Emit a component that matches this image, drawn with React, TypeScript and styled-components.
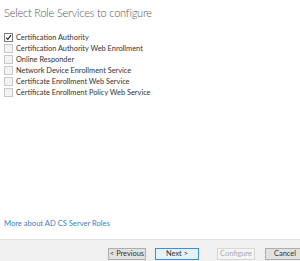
import React from 'react'
import styled, { createGlobalStyle } from 'styled-components'

const GlobalStyle = createGlobalStyle`
  html, body {
    margin: 0;
    padding: 0;
    background: #ffffff;
  }
  body {
    font-family: 'Lato', 'Liberation Sans', sans-serif;
  }
`

const Page = styled.div`
  width: 300px;
  height: 261px;
  display: flex;
  flex-direction: column;
  overflow: hidden;
  background: #fff;
`

const Content = styled.div`
  flex: 1;
  display: flex;
  flex-direction: column;
  padding: 5px 0 0 4px;
`

const Title = styled.h1`
  margin: 0;
  font-family: 'Lato', sans-serif;
  font-weight: 300;
  font-size: 11px;
  letter-spacing: -0.2px;
  line-height: 15px;
  color: #555;
`

const RoleList = styled.ul`
  list-style: none;
  margin: 13px 0 0;
  padding: 0;
  display: flex;
  flex-direction: column;
  gap: 2px;
`

const RoleItem = styled.li`
  display: flex;
  align-items: center;
  gap: 3px;
  height: 9px;
  font-size: 7.4px;
  color: #333;
`

const Box = styled.span<{ $checked?: boolean }>`
  width: 7px;
  height: 7px;
  border: 1px solid ${p => (p.$checked ? '#7a7a7a' : '#c8c8c8')};
  background: ${p => (p.$checked ? '#fff' : '#f3f3f3')};
  display: flex;
  align-items: center;
  justify-content: center;
  flex-shrink: 0;
`

const MoreLink = styled.a`
  margin-top: auto;
  margin-bottom: 11px;
  font-size: 7.6px;
  color: #3a7fc4;
  text-decoration: none;
`

const Footer = styled.div`
  height: 22px;
  background: #f0f0f0;
  border-top: 1px solid #e3e3e3;
  display: flex;
  align-items: flex-start;
  padding: 8px 0 0 108px;
  box-sizing: border-box;
`

const Button = styled.button<{ $variant?: 'default' | 'primary' | 'disabled'; $w: number; $ml: number }>`
  width: ${p => p.$w}px;
  height: 12px;
  margin-left: ${p => p.$ml}px;
  flex-shrink: 0;
  padding: 0;
  font-family: 'Lato', sans-serif;
  font-size: 7.4px;
  line-height: 10px;
  border: 1px solid
    ${p => (p.$variant === 'primary' ? '#3c8fd9' : p.$variant === 'disabled' ? '#d6d6d6' : '#adadad')};
  background: ${p => (p.$variant === 'primary' ? '#e5f1fb' : p.$variant === 'disabled' ? '#f5f5f5' : '#e1e1e1')};
  color: ${p => (p.$variant === 'disabled' ? '#a8a8a8' : '#333')};
`

const roles = [
  { name: 'Certification Authority', checked: true },
  { name: 'Certification Authority Web Enrollment' },
  { name: 'Online Responder' },
  { name: 'Network Device Enrollment Service' },
  { name: 'Certificate Enrollment Web Service' },
  { name: 'Certificate Enrollment Policy Web Service' },
]

const Check = () => (
  <svg width="7" height="7" viewBox="0 0 7 7">
    <path d="M1 3.6 L2.8 5.4 L6 1.2" fill="none" stroke="#222" strokeWidth="1.1" />
  </svg>
)

const App = () => {
  return (
    <Page>
      <GlobalStyle />
      <Content>
        <Title>Select Role Services to configure</Title>
        <RoleList>
          {roles.map(r => (
            <RoleItem key={r.name}>
              <Box $checked={r.checked}>{r.checked && <Check />}</Box>
              {r.name}
            </RoleItem>
          ))}
        </RoleList>
        <MoreLink href="#">More about AD CS Server Roles</MoreLink>
      </Content>
      <Footer>
        <Button $w={38} $ml={0}>&lt; Previous</Button>
        <Button $variant="primary" $w={44} $ml={9}>Next &gt;</Button>
        <Button $variant="disabled" $w={38} $ml={18}>Configure</Button>
        <Button $w={40} $ml={10}>Cancel</Button>
      </Footer>
    </Page>
  )
}

export default App
